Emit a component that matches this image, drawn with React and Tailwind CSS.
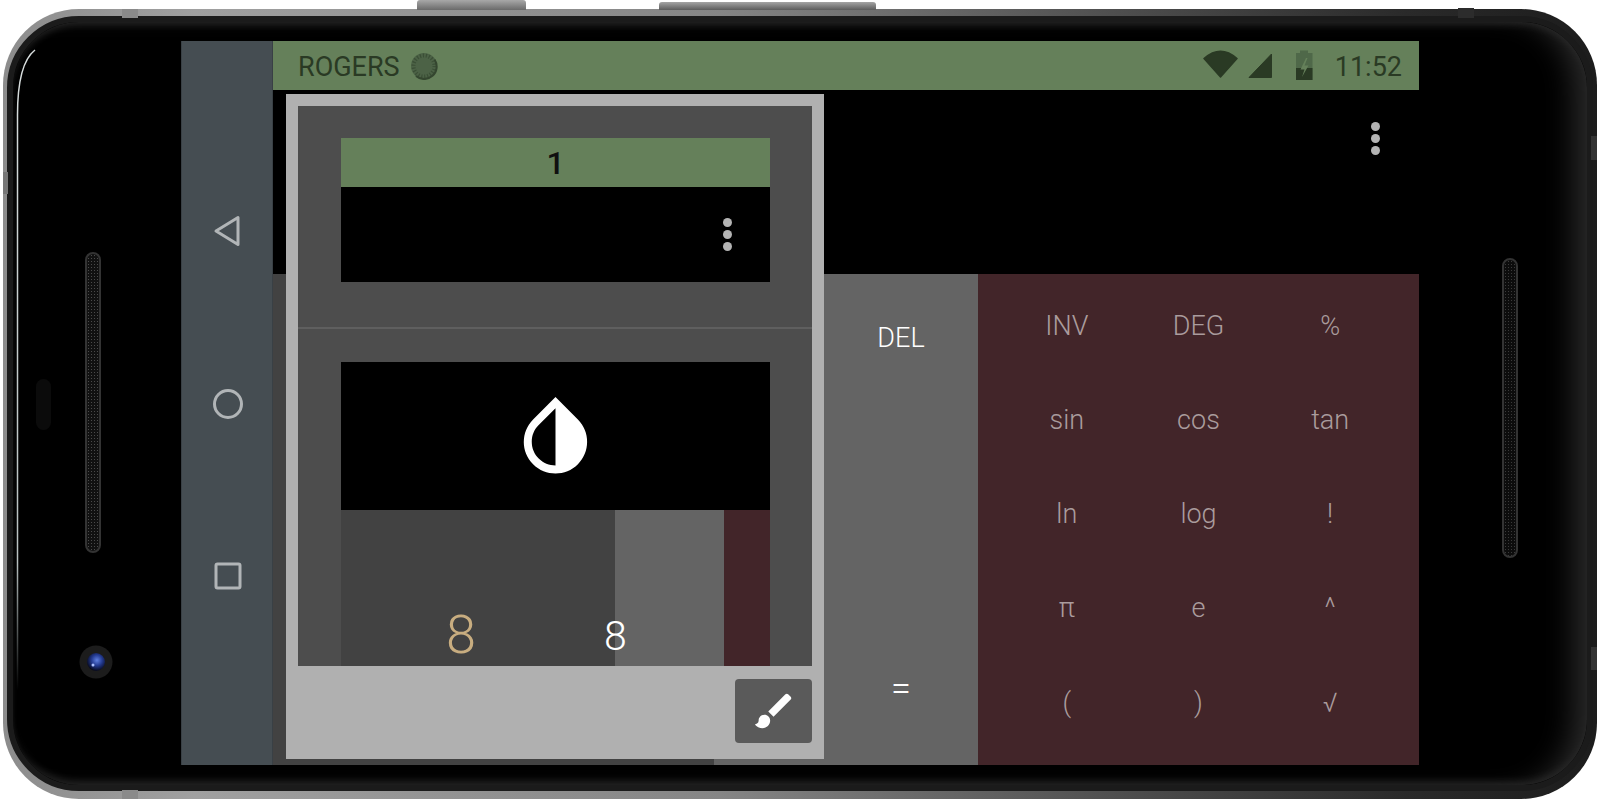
import React from "react";

const SCI_KEYS = ["INV", "DEG", "%", "sin", "cos", "tan", "ln", "log", "!", "π", "e", "^", "(", ")", "√"];

// Overflow menu dots, used by the toolbar and by the theme preview
const Dots = () => (
  <div className="flex flex-col gap-[3px]">
    <div className="h-[9px] w-[9px] rounded-full bg-[#b4b4b4]" />
    <div className="h-[9px] w-[9px] rounded-full bg-[#b4b4b4]" />
    <div className="h-[9px] w-[9px] rounded-full bg-[#b4b4b4]" />
  </div>
);

const Spinner = () => (
  <svg width="28" height="28" viewBox="0 0 28 28">
    <circle cx="14" cy="14" r="13" fill="#4c6246" />
    <circle cx="14" cy="14" r="10.5" fill="none" stroke="#3b4f36" strokeWidth="4" strokeDasharray="1.2 1.8" />
    <path d="M24.5 7.5A12.5 12.5 0 0 1 6 24" fill="none" stroke="#34462f" strokeWidth="2" />
  </svg>
);

const StatusIcons = () => (
  <svg width="110" height="31" viewBox="0 0 110 31">
    <path d="M1 8.5Q17.5 -6 34 8.5L17.5 27Z" fill="#2a3a24" stroke="#2a3a24" strokeWidth="1.5" strokeLinejoin="round" />
    <path d="M46 27.5L68.5 4V27.5Z" fill="#2a3a24" stroke="#2a3a24" strokeWidth="1" strokeLinejoin="round" />
    <path d="M97 3V0.5H105V3H109.5V30H93V3Z" fill="#4f6849" />
    <path d="M93 18H109.5V30H93Z" fill="#2a3a24" />
    <path d="M103 8L97.5 19.5H101.5L99 27L105.5 15.5H101.5L104.5 8Z" fill="#65805a" />
  </svg>
);

const NavIcons = () => (
  <div className="flex h-full flex-col items-center justify-center gap-[140px] pl-[1px]">
    <svg width="32" height="34" viewBox="0 0 32 34">
      <path d="M4 17L26 3.5V30.5Z" fill="none" stroke="#b1b5b7" strokeWidth="3" strokeLinejoin="round" />
    </svg>
    <svg width="32" height="32" viewBox="0 0 32 32">
      <circle cx="16" cy="16" r="13.5" fill="none" stroke="#b1b5b7" strokeWidth="3" />
    </svg>
    <svg width="32" height="32" viewBox="0 0 32 32">
      <rect x="4" y="4" width="24" height="24" rx="1.5" fill="none" stroke="#b1b5b7" strokeWidth="3" />
    </svg>
  </div>
);

const ThemeDialog = () => (
  <div className="absolute left-[105px] top-[53px] flex h-[665px] w-[538px] flex-col bg-[#b0b0b0] px-[12px] pt-[12px]">
    <div className="flex h-[560px] flex-col bg-[#4d4d4d]">
      <div className="ml-[43px] mr-[42px] mt-[32px]">
        <div className="flex h-[49px] items-center justify-center bg-[#65805a] text-[32px] font-medium text-[#101010]">1</div>
        <div className="flex h-[95px] justify-end bg-black pr-[38px] pt-[31px]">
          <Dots />
        </div>
      </div>
      <div className="mt-[45px] h-[2px] bg-[#5f5f5f]" />
      <div className="ml-[43px] mr-[42px] mt-[33px] flex h-[148px] items-center justify-center bg-black">
        <svg width="95" height="95" viewBox="0 0 24 24" fill="#fff">
          <path d="M17.66 7.93L12 2.27 6.34 7.93c-3.12 3.12-3.12 8.19 0 11.31C7.9 20.8 9.95 21.58 12 21.58c2.05 0 4.1-.78 5.66-2.34 3.12-3.12 3.12-8.19 0-11.31zM12 19.59c-1.6 0-3.11-.62-4.24-1.76C6.62 16.69 6 15.19 6 13.59s.62-3.11 1.76-4.24L12 5.1v14.49z" />
        </svg>
      </div>
      <div className="ml-[43px] mr-[42px] flex h-[157px]">
        <div className="relative z-10 flex w-[274px] items-end bg-[#424242] pl-[105px] font-light leading-none">
          <span className="mb-[4px] w-[30px] text-center text-[54px] text-[#c8ad80]">8</span>
          <span className="mb-[9px] ml-[128px] w-[26px] text-center text-[41px] text-white">8</span>
        </div>
        <div className="w-[109px] bg-[#646464]" />
        <div className="flex-1 bg-[#422529]" />
      </div>
    </div>
    <div className="flex flex-1 justify-end pt-[13px]">
      <div className="flex h-[64px] w-[77px] items-center justify-center rounded-[4px] bg-[#5a5a5a]">
        <svg width="46" height="46" viewBox="0 0 24 24" fill="#fff">
          <path d="M7 14c-1.66 0-3 1.34-3 3 0 1.31-1.16 2-2 2 .92 1.22 2.49 2 4 2 2.21 0 4-1.79 4-4 0-1.66-1.34-3-3-3zm13.71-9.37l-1.34-1.34c-.39-.39-1.02-.39-1.41 0L9 12.25 11.75 15l8.96-8.96c.39-.39.39-1.03 0-1.41z" />
        </svg>
      </div>
    </div>
  </div>
);

// Speaker slots, sensor, camera and the bits of metal on the phone body
const Hardware = () => (
  <>
    <div className="absolute left-[417px] top-0 h-[10px] w-[109px] rounded-t-[3px] bg-[linear-gradient(#a8a8a8,#6a6a6a)]" />
    <div className="absolute left-[659px] top-[2px] h-[8px] w-[217px] rounded-t-[3px] bg-[linear-gradient(#a4a4a4,#5c5c5c)]" />
    <div className="absolute left-[85px] top-[252px] h-[301px] w-[16px] rounded-full border-2 border-[#333] bg-[radial-gradient(#4a4a4a_1px,#111_1px)] bg-[length:3px_3px]" />
    <div className="absolute left-[1502px] top-[258px] h-[300px] w-[16px] rounded-full border-2 border-[#333] bg-[radial-gradient(#3a3a3a_1px,#0c0c0c_1px)] bg-[length:3px_3px]" />
    <div className="absolute left-[36px] top-[379px] h-[51px] w-[15px] rounded-full bg-[#0b0b0b]" />
    <svg className="absolute left-0 top-0" width="1598" height="800" viewBox="0 0 1598 800" fill="none">
      <defs>
        <radialGradient id="lens" cx="0.55" cy="0.4" r="0.6">
          <stop offset="0" stopColor="#5f7fe0" />
          <stop offset="0.5" stopColor="#233a90" />
          <stop offset="1" stopColor="#06081a" />
        </radialGradient>
        <linearGradient id="shine" x1="0" y1="50" x2="0" y2="690" gradientUnits="userSpaceOnUse">
          <stop offset="0" stopColor="#d8dede" />
          <stop offset="0.8" stopColor="#b8c0c0" />
          <stop offset="1" stopColor="#000" />
        </linearGradient>
      </defs>
      <circle cx="96" cy="662" r="16.5" fill="#1c1c1c" />
      <circle cx="96" cy="662" r="9" fill="url(#lens)" />
      <circle cx="93" cy="665" r="1.5" fill="#aac0ff" />
      <path d="M35 50C22 60 17.5 85 17.5 115V690" stroke="url(#shine)" strokeWidth="1.5" />
      <rect x="122" y="9" width="16" height="9" fill="#8a8a8a" />
      <rect x="122" y="790" width="16" height="9" fill="#8a8a8a" />
      <rect x="1458" y="8" width="16" height="10" fill="#2c2c2c" />
      <rect x="3" y="172" width="5" height="22" fill="#777" />
      <rect x="1591" y="136" width="6" height="24" fill="#333" />
      <rect x="1591" y="647" width="6" height="23" fill="#333" />
    </svg>
  </>
);

const App = () => {
  return (
    <div className="relative h-[800px] w-[1598px] overflow-hidden bg-white pl-[3px] pt-[9px] font-['Roboto',sans-serif]">
      <div className="h-[790px] w-[1594px] rounded-[76px] bg-[linear-gradient(90deg,#8c8c8c,#a0a0a0_12%,#858585_45%,#4e4e4e_70%,#2a2a2a_88%,#1c1c1c)] pb-[8px] pl-[4px] pr-[4px] pt-[7px]">
        <div className="h-[775px] rounded-[72px] border-[6px] border-[#1b1b1b] bg-black pl-[168px] pt-[19px] shadow-[inset_-26px_0_30px_-14px_#2c2c2c,inset_0_6px_8px_-4px_#2a2a2a,inset_0_-8px_8px_-5px_#262626]">
          <div className="relative flex h-[724px] w-[1238px]">
            <div className="w-[92px] border-x border-[#394045] bg-[#454d52]">
              <NavIcons />
            </div>
            <div className="flex flex-1 flex-col">
              <div className="flex h-[49px] items-center justify-between bg-[#65805a] pl-[25px] pr-[17px] text-[27px] text-[#2a3a24]">
                <div className="flex items-center gap-[10px]">
                  <span className="pt-[4px]">ROGERS</span>
                  <Spinner />
                </div>
                <div className="flex items-center gap-[22px]">
                  <StatusIcons />
                  <span className="pt-[4px]">11:52</span>
                </div>
              </div>
              <div className="flex h-[184px] justify-end bg-black pr-[39px] pt-[32px]">
                <Dots />
              </div>
              <div className="flex flex-1 text-[27px] font-light">
                <div className="w-[441px] bg-[#424242]" />
                <div className="flex w-[264px] flex-col justify-between bg-[#646464] pb-[49px] pl-[110px] pt-[44px] text-white">
                  <div className="w-[154px] text-center">DEL</div>
                  <div className="w-[154px] text-center text-[36px]">=</div>
                </div>
                <div className="grid w-[441px] grid-cols-3 grid-rows-5 items-center justify-items-center bg-[#422529] px-[23px] pb-[15px] pt-[5px] text-[#aa9c9d]">
                  {SCI_KEYS.map((key) => (
                    <div key={key}>{key}</div>
                  ))}
                </div>
              </div>
            </div>
            <ThemeDialog />
          </div>
        </div>
      </div>
      <Hardware />
    </div>
  );
};

export default App;
